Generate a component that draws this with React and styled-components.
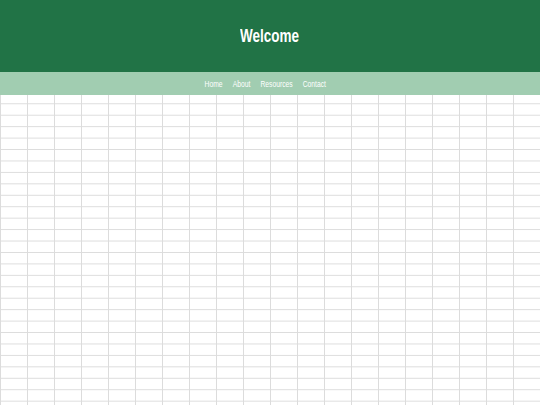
import React from "react";
import styled, { createGlobalStyle } from "styled-components";

const GlobalStyle = createGlobalStyle`
  html, body {
    margin: 0;
    padding: 0;
    background: #ffffff;
    font-family: "Liberation Sans", Arial, sans-serif;
  }
`;

const Page = styled.div`
  width: 540px;
  height: 405px;
  display: flex;
  flex-direction: column;
  overflow: hidden;
`;

const Header = styled.header`
  height: 72px;
  background: #217346;
  display: flex;
  align-items: center;
  justify-content: center;
`;

const Title = styled.h1`
  margin: 0;
  color: #ffffff;
  font-size: 19px;
  font-weight: 700;
  transform: scaleX(0.71);
`;

const NavBar = styled.nav`
  height: 23px;
  background: #a1cdb1;
  display: flex;
  align-items: center;
  justify-content: center;
`;

const NavList = styled.ul`
  list-style: none;
  margin: 0;
  padding: 0 14px 0 0;
  display: flex;
  gap: 14px;
  transform: scaleX(0.72);
`;

const NavItem = styled.li`
  color: #ffffff;
  font-size: 9.4px;
  line-height: 1;
`;

const Sheet = styled.main`
  flex: 1;
  background-color: #ffffff;
  background-image:
    linear-gradient(to right, #dcdcdc 1px, transparent 1px),
    linear-gradient(to bottom, #dcdcdc 1px, transparent 1px);
  background-size: 27px 11.44px;
  background-position: 0 8.3px;
`;

const links = ["Home", "About", "Resources", "Contact"];

export default function App() {
  return (
    <Page>
      <GlobalStyle />
      <Header>
        <Title>Welcome</Title>
      </Header>
      <NavBar>
        <NavList>
          {links.map((l) => (
            <NavItem key={l}>{l}</NavItem>
          ))}
        </NavList>
      </NavBar>
      <Sheet />
    </Page>
  );
}
